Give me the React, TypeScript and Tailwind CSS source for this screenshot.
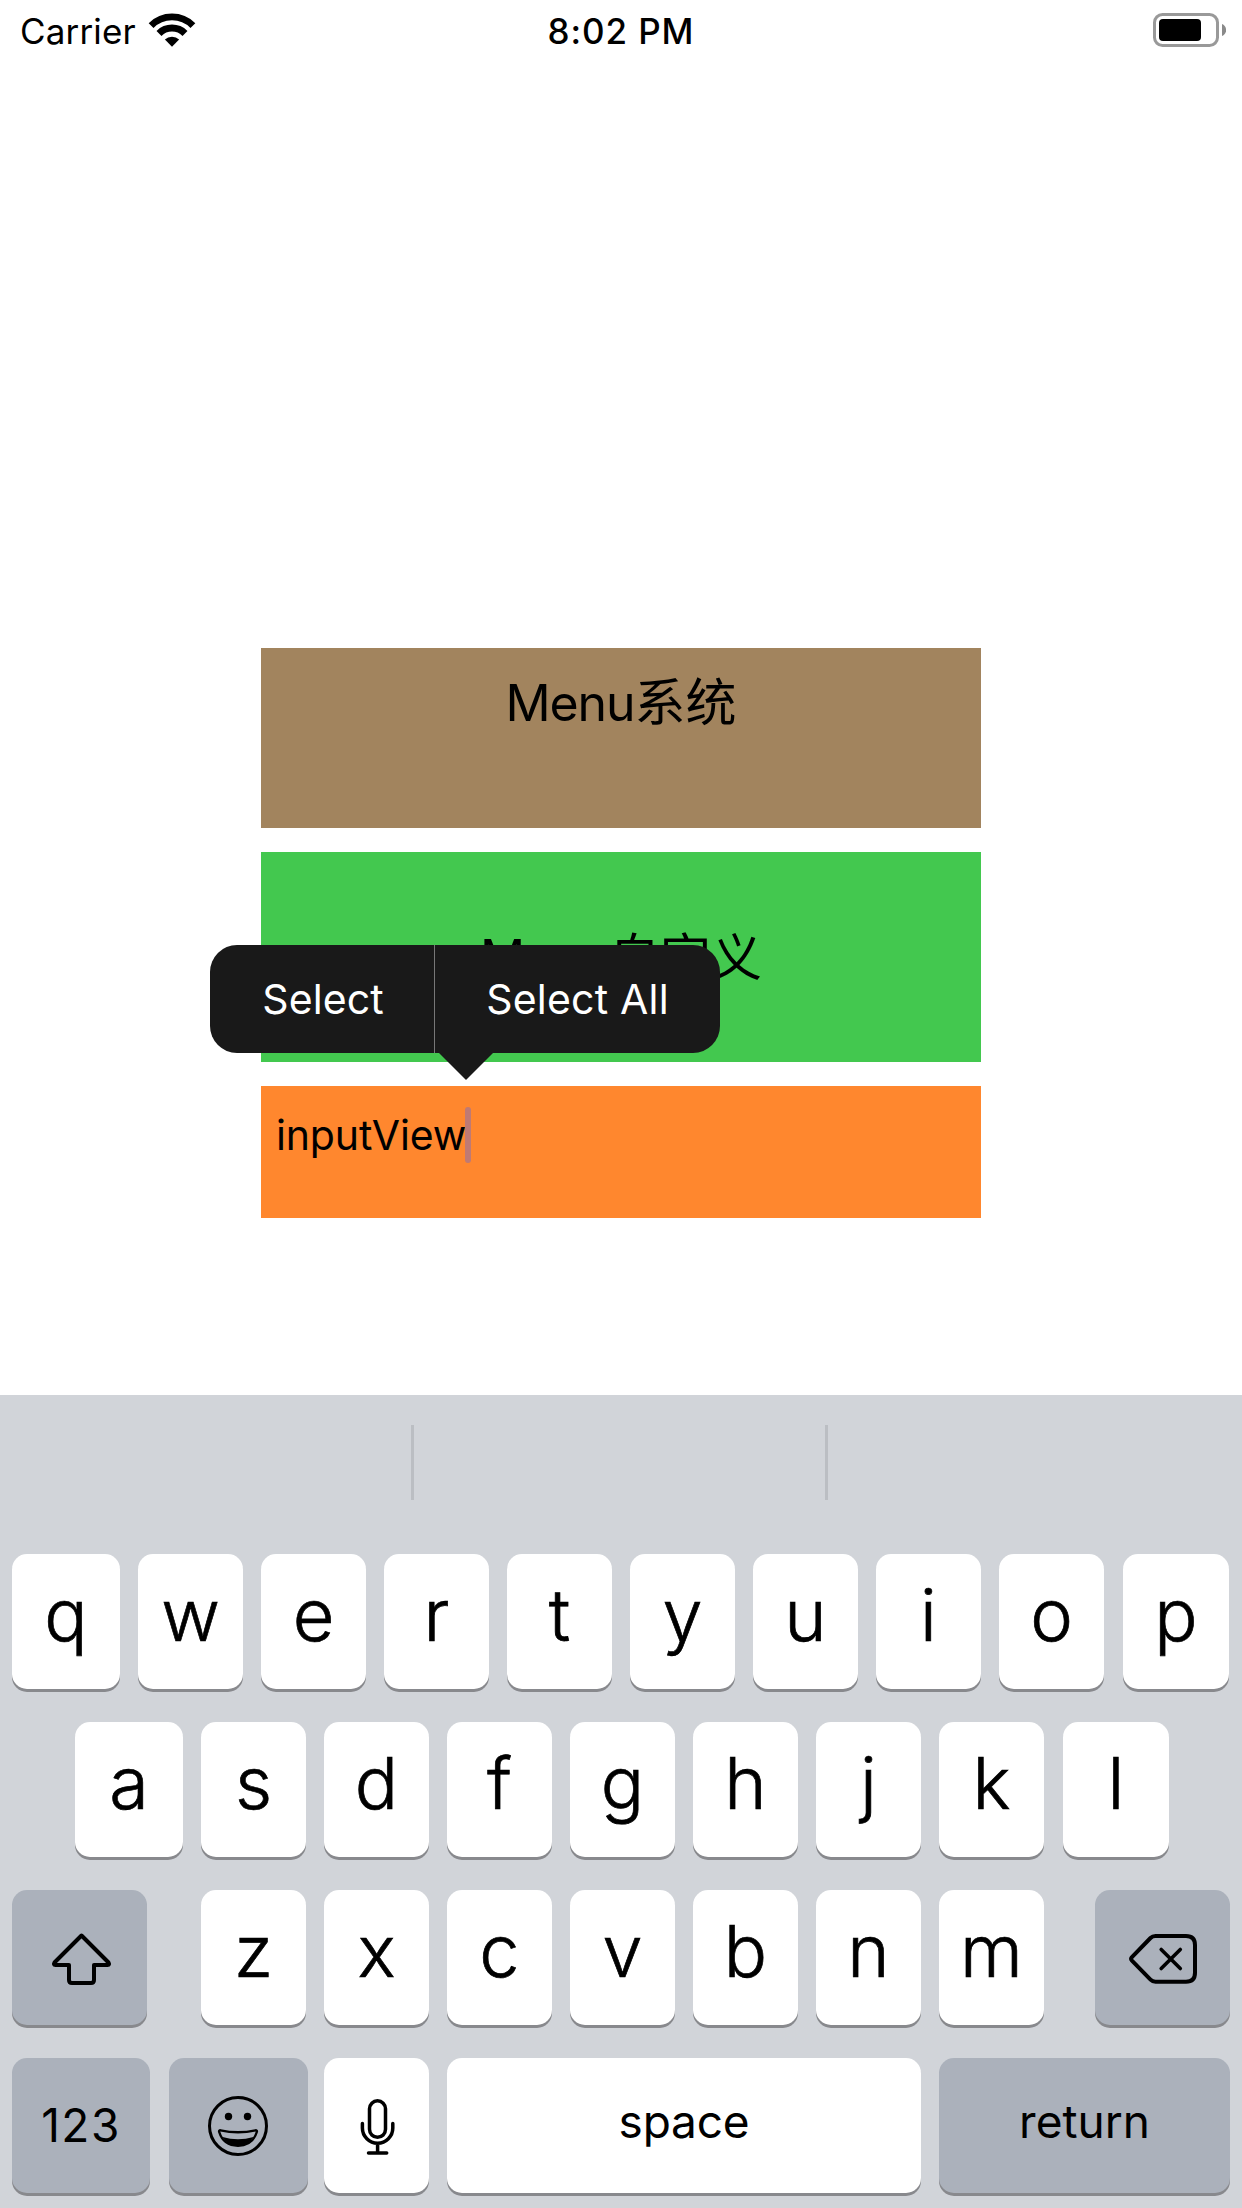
import type { ReactNode } from 'react';

function StatusBar() {
  return (
    <header className="grid h-[62px] grid-cols-3 items-center text-[35px] leading-none">
      <div className="flex items-center gap-3 pl-5">
        <span className="tracking-[0.15px]">Carrier</span>
        <svg className="mb-[3px] h-[34px] w-[48px]" viewBox="148 12.5 48 34" fill="none" stroke="#000">
          <path d="M172 46.2 L164.9 39.1 A10 10 0 0 1 179.1 39.1 Z" fill="#000" stroke="none" />
          <path d="M159 33 A18.4 18.4 0 0 1 185 33" strokeWidth="7" />
          <path d="M151.1 25.1 A29.5 29.5 0 0 1 192.9 25.1" strokeWidth="6.8" />
        </svg>
      </div>
      <div className="text-center font-medium tracking-[0.9px]">8:02 PM</div>
      <div className="flex justify-end pr-4">
        <svg className="mb-[2px] h-[34px] w-[73px]" viewBox="1153 13 73 34" fill="none">
          <rect x="1154.5" y="14.5" width="63" height="31" rx="8" stroke="#999" strokeWidth="3" />
          <rect x="1159" y="19" width="42" height="22" rx="4" fill="#000" />
          <path d="M1222 24 C1227.500 26 1227.500 34 1222 36 Z" fill="#8a8a8a" />
        </svg>
      </div>
    </header>
  );
}

function EditMenu() {
  return (
    <div className="absolute left-[-51px] top-[93px] flex h-[108px] w-[510px] rounded-[27px] bg-[#191919] text-[41px] leading-[108px] text-white">
      <div className="w-[224px] pl-[2px] text-center tracking-[0.1px]">Select</div>
      <div className="w-px bg-[#777]" />
      <div className="flex-1 text-center tracking-[0.2px]">Select All</div>
      <svg className="absolute left-[228px] top-[107px] h-7 w-14" viewBox="0 0 56 28">
        <path d="M0 0 H56 L28.500 27.500 Q28 28 27.500 27.500 Z" fill="#191919" />
      </svg>
    </div>
  );
}

function Key({ w, dark, children, className = '' }: { w: string; dark?: boolean; children: ReactNode; className?: string }) {
  return (
    <div
      className={`flex h-[135px] shrink-0 items-center justify-center rounded-[15px] shadow-[0_3px_0_#88898d] ${
        dark ? 'bg-[#abb1bb]' : 'bg-white'
      } ${w} ${className}`}
    >
      {children}
    </div>
  );
}

function Letter({ c, w = 'w-[105px]' }: { c: string; w?: string }) {
  return (
    <Key w={w} className="pb-[14px] text-[72px] font-light leading-none [-webkit-text-stroke:0.7px_#000]">
      {c}
    </Key>
  );
}

function Keyboard() {
  return (
    <section className="h-[813px] bg-[#d1d4d9]">
      <div className="flex h-[159px] pt-[30px]">
        <div className="ml-[411px] h-[75px] w-[3px] bg-[#bbbec3]" />
        <div className="ml-[411px] h-[75px] w-[3px] bg-[#bbbec3]" />
      </div>
      <div className="flex flex-col gap-[33px]">
        <div className="flex gap-[18px] pl-3">
          <Letter c="q" w="w-[108px]" />
          {[...'wertyuio'].map((c) => (
            <Letter key={c} c={c} />
          ))}
          <Letter c="p" w="ml-px w-[106px]" />
        </div>
        <div className="flex gap-[18px] pl-[75px]">
          <Letter c="a" w="w-[108px]" />
          {[...'sdfghjk'].map((c) => (
            <Letter key={c} c={c} />
          ))}
          <Letter c="l" w="ml-px w-[106px]" />
        </div>
        <div className="flex justify-between px-3">
          <Key w="w-[135px]" dark>
            <svg className="size-full" viewBox="12 1890 135 135" fill="none" stroke="#000" strokeWidth="4" strokeLinejoin="round">
              <path d="M81.500 1935.500 L108.500 1962.500 Q110 1965 107.500 1965 H94 V1980 Q94 1983 91 1983 H72 Q69 1983 69 1980 V1965 H55.500 Q53 1965 54.500 1962.500 Z" />
            </svg>
          </Key>
          <div className="ml-[3px] flex gap-[18px]">
            {[...'zxcvbnm'].map((c) => (
              <Letter key={c} c={c} />
            ))}
          </div>
          <Key w="w-[135px]" dark>
            <svg className="size-full" viewBox="1095 1890 135 135" fill="none" stroke="#000" strokeWidth="4" strokeLinecap="round" strokeLinejoin="round">
              <path d="M1131.700 1957.300 L1150.500 1938 Q1152.500 1936 1155.500 1936 H1186 Q1195 1936 1195 1945 V1972.700 Q1195 1981.700 1186 1981.700 H1155.500 Q1152.500 1981.700 1150.500 1979.700 L1131.700 1960.300 Q1130.500 1958.800 1131.700 1957.300 Z" />
              <path d="M1161.200 1949.500 L1180.300 1968.600 M1180.300 1949.500 L1161.200 1968.600" strokeWidth="3.6" />
            </svg>
          </Key>
        </div>
        <div className="flex pl-3 text-[46px] leading-none">
          <Key w="w-[138px]" dark className="pb-px tracking-[1.5px]">
            <span>123</span>
          </Key>
          <Key w="ml-[19px] w-[139px]" dark>
            <svg className="size-full" viewBox="169 2058 139 135" fill="none" stroke="#000" strokeLinejoin="round">
              <circle cx="238" cy="2126" r="28.500" strokeWidth="3" />
              <circle cx="228.500" cy="2116.500" r="3.700" fill="#000" stroke="none" />
              <circle cx="247.500" cy="2116.500" r="3.700" fill="#000" stroke="none" />
              <path d="M220.500 2130.300 Q238 2134.200 255.500 2130.300 Q257.300 2130.300 256.800 2132 C254 2141 247 2145.700 238 2145.700 S222 2141 219.200 2132 Q218.700 2130.300 220.500 2130.300 Z" strokeWidth="2.4" />
              <path d="M222.500 2137 Q238 2141.500 253.500 2137 Q249 2146 238 2146 T222.500 2137 Z" fill="#000" stroke="none" />
            </svg>
          </Key>
          <Key w="ml-4 w-[105px]">
            <svg className="size-full" viewBox="324 2058 105 135" fill="none" stroke="#000" strokeWidth="3.5" strokeLinecap="round">
              <rect x="369.500" y="2100.800" width="16" height="36.500" rx="8" />
              <path d="M362.400 2123.500 V2128 A15.200 15.200 0 0 0 392.800 2128 V2123.500 M377.600 2144 V2152 M368.500 2153 H386.700" />
            </svg>
          </Key>
          <Key w="ml-[18px] w-[474px]" className="pb-[9px] tracking-[-0.2px]">
            space
          </Key>
          <Key w="ml-[18px] w-[291px]" dark className="pb-[9px]">
            return
          </Key>
        </div>
      </div>
    </section>
  );
}

export default function App() {
  return (
    <main className="flex h-[2208px] w-[1242px] flex-col overflow-hidden bg-white font-['Inter','Noto_Sans_CJK_SC',sans-serif] text-black">
      <StatusBar />
      <div className="mx-auto mt-[586px] flex w-[720px] flex-col gap-6">
        <div className="h-[180px] bg-[#a2845e] pt-[25px] text-center text-[50px] leading-[60px]">
          <span className="tracking-[-1.1px]">Menu</span>
          <span className="text-[51px]">系统</span>
        </div>
        <div className="relative h-[210px] bg-[#43c84f] text-center text-[50px] leading-[212px]">
          <span className="tracking-[-1.1px]">Menu</span>
          <span className="text-[51px]">自定义</span>
          <EditMenu />
        </div>
        <div className="flex h-[132px] items-start bg-[#ff872e] pl-[15px]">
          <span className="mt-[19px] text-[41px] leading-[60px] tracking-[-0.15px]">inputView</span>
          <span className="-ml-px mt-[21px] h-[56px] w-[6px] rounded-full bg-[#bf7a74]" />
        </div>
      </div>
      <div className="mt-[177px]">
        <Keyboard />
      </div>
    </main>
  );
}
